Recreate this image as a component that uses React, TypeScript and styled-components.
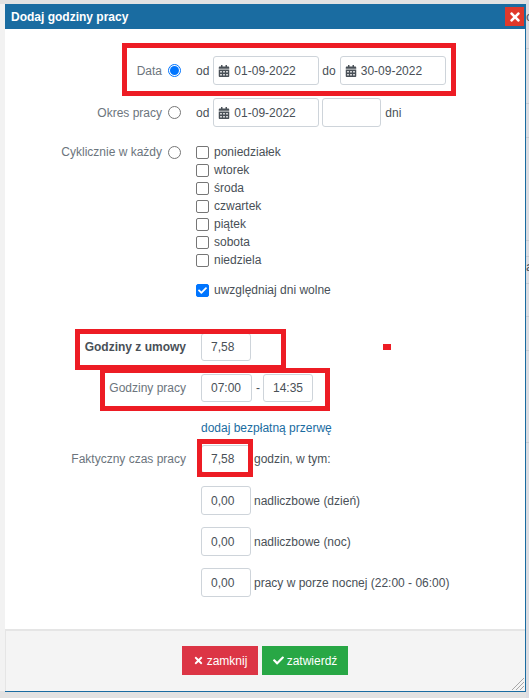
import React from "react";
import styled, { createGlobalStyle } from "styled-components";
import { FaCalendarAlt, FaCheck, FaTimes } from "react-icons/fa";

const GlobalStyle = createGlobalStyle`
  html, body {
    margin: 0;
    padding: 0;
    background: #f2f2f2;
  }
  * {
    box-sizing: border-box;
  }
`;

const Page = styled.div`
  width: 529px;
  height: 698px;
  padding: 4px 3px 6px 5px;
  overflow: hidden;
  position: relative;
  font-family: "Liberation Sans", Arial, sans-serif;
  font-size: 12px;
  color: #495057;
  background: linear-gradient(#e2e2e2 0 4px, #f2f2f2 4px 691px, #e2e2e2 691px);
`;

// sliver of the page behind the dialog
const BackdropEdge = styled.div`
  position: absolute;
  top: 0;
  right: 0;
  width: 3px;
  height: 698px;
  overflow: hidden;
  background: #dcdde2;
`;

const EdgeLine = styled.div<{ $y: number }>`
  position: absolute;
  left: 0;
  top: ${(p) => p.$y}px;
  width: 3px;
  height: 1px;
  background: #c9cbd1;
`;

const EdgeGlyph = styled.span<{ $y: number }>`
  position: absolute;
  left: 0;
  top: ${(p) => p.$y}px;
  font-size: 13px;
  line-height: 14px;
  color: #4a5058;
`;

const Dialog = styled.div`
  width: 521px;
  height: 688px;
  position: relative;
  display: flex;
  flex-direction: column;
  background: #fff;
  border-right: 1px solid #1a6ca1;
  border-bottom: 1px solid #1a6ca1;
`;

const TitleBar = styled.div`
  height: 25px;
  flex: none;
  display: flex;
  align-items: center;
  justify-content: space-between;
  padding: 0 0 0 6px;
  background: #1a6ca1;
  color: #fff;
  font-size: 12px;
  font-weight: 700;
`;

const CloseButton = styled.button`
  width: 19px;
  height: 19px;
  margin-right: 1px;
  padding: 0;
  border: 0;
  display: flex;
  align-items: center;
  justify-content: center;
  background: #e0392b;
  color: #fff;
  font-size: 14px;
`;

const Body = styled.div`
  flex: 1;
  padding-top: 27px;
`;

const Row = styled.div<{ $top?: number; $height?: number }>`
  display: flex;
  align-items: center;
  height: ${(p) => p.$height ?? 29}px;
  margin-top: ${(p) => p.$top ?? 0}px;
`;

const ChoiceLabel = styled.span`
  width: 157px;
  flex: none;
  text-align: right;
  color: #6c757d;
`;

const HoursLabel = styled.span<{ $bold?: boolean }>`
  width: 181px;
  margin-right: 15px;
  flex: none;
  text-align: right;
  color: ${(p) => (p.$bold ? "#495057" : "#6c757d")};
  font-weight: ${(p) => (p.$bold ? 700 : 400)};
`;

const Radio = styled.span<{ $on?: boolean }>`
  width: 13px;
  height: 13px;
  margin: 0 15px 0 6px;
  flex: none;
  border-radius: 50%;
  background: #fff;
  border: 1px solid ${(p) => (p.$on ? "#0075ff" : "#767676")};
  display: flex;
  align-items: center;
  justify-content: center;

  &::after {
    content: "";
    width: 9px;
    height: 9px;
    border-radius: 50%;
    background: ${(p) => (p.$on ? "#0075ff" : "transparent")};
  }
`;

const Word = styled.span<{ $left?: number; $right?: number }>`
  margin-left: ${(p) => p.$left ?? 0}px;
  margin-right: ${(p) => p.$right ?? 0}px;
  white-space: nowrap;
`;

const Field = styled.div<{ $width?: number; $height?: number; $left?: number }>`
  width: ${(p) => p.$width ?? 50}px;
  height: ${(p) => p.$height ?? 29}px;
  margin-left: ${(p) => p.$left ?? 0}px;
  padding-left: 9px;
  flex: none;
  display: flex;
  align-items: center;
  border: 1px solid #ced4da;
  border-radius: 3px;
  background: #fff;
`;

const DateField = styled(Field)`
  width: 106px;
  gap: 4px;
  padding-left: 4px;

  svg {
    font-size: 12px;
    color: #495057;
  }
`;

const CycleRow = styled.div`
  display: flex;
  align-items: flex-start;
  margin-top: 16px;
`;

const CycleLabel = styled(Row)`
  height: 18px;
  width: 191px;
  flex: none;
`;

const DayList = styled.div`
  display: flex;
  flex-direction: column;
`;

const DayRow = styled.label<{ $top?: number }>`
  height: 18px;
  margin-top: ${(p) => p.$top ?? 0}px;
  display: flex;
  align-items: center;
  gap: 5px;
`;

const CheckBox = styled.span<{ $on?: boolean }>`
  width: 13px;
  height: 13px;
  flex: none;
  border-radius: 2px;
  border: 1px solid ${(p) => (p.$on ? "#0075ff" : "#767676")};
  background: ${(p) => (p.$on ? "#0075ff" : "#fff")};
  display: flex;
  align-items: center;
  justify-content: center;
  color: #fff;
  font-size: 9px;
`;

const BreakLink = styled.a`
  display: block;
  height: 18px;
  line-height: 18px;
  margin: 17px 0 8px 196px;
  color: #1a6ca1;
`;

const Footer = styled.div`
  height: 62px;
  flex: none;
  display: flex;
  justify-content: center;
  gap: 4px;
  padding: 15px 1px 0 0;
  background: #f4f4f4;
  border-top: 2px solid #e5e5e5;
  border-left: 1px solid #e5e5e5;
`;

const ActionButton = styled.button<{ $color: string; $width: number }>`
  width: ${(p) => p.$width}px;
  height: 29px;
  padding: 0;
  border: 0;
  display: flex;
  align-items: center;
  justify-content: center;
  gap: 3px;
  background: ${(p) => p.$color};
  color: #fff;
  font-family: inherit;
  font-size: 12px;

  svg {
    font-size: 11px;
  }
`;

const Highlight = styled.div<{ $x: number; $y: number; $w: number; $h: number }>`
  position: absolute;
  left: ${(p) => p.$x}px;
  top: ${(p) => p.$y}px;
  width: ${(p) => p.$w}px;
  height: ${(p) => p.$h}px;
  border: 5px solid #ed1c24;
`;

const RedDot = styled.div`
  position: absolute;
  left: 383px;
  top: 344px;
  width: 8px;
  height: 6px;
  background: #ed1c24;
`;

const ResizeGrip = styled.svg`
  position: absolute;
  right: 0;
  bottom: 0;
`;

const days = ["poniedziałek", "wtorek", "środa", "czwartek", "piątek", "sobota", "niedziela"];

const extras = ["nadliczbowe (dzień)", "nadliczbowe (noc)", "pracy w porze nocnej (22:00 - 06:00)"];

const edgeLines = [48, 103, 137, 240, 256, 283, 316, 350, 442];

const App: React.FC = () => {
  return (
    <Page>
      <GlobalStyle />
      <BackdropEdge>
        {edgeLines.map((y) => (
          <EdgeLine key={y} $y={y} />
        ))}
        <EdgeGlyph $y={10}>c</EdgeGlyph>
        <EdgeGlyph $y={260}>a</EdgeGlyph>
      </BackdropEdge>
      <Dialog>
        <TitleBar>
          Dodaj godziny pracy
          <CloseButton>
            <FaTimes />
          </CloseButton>
        </TitleBar>
        <Body>
          <Row>
            <ChoiceLabel>Data</ChoiceLabel>
            <Radio $on />
            <Word $right={4}>od</Word>
            <DateField>
              <FaCalendarAlt />
              01-09-2022
            </DateField>
            <Word $left={3} $right={4}>do</Word>
            <DateField>
              <FaCalendarAlt />
              30-09-2022
            </DateField>
          </Row>
          <Row $top={13}>
            <ChoiceLabel>Okres pracy</ChoiceLabel>
            <Radio />
            <Word $right={4}>od</Word>
            <DateField>
              <FaCalendarAlt />
              01-09-2022
            </DateField>
            <Field $width={59} $left={3} />
            <Word $left={4}>dni</Word>
          </Row>
          <CycleRow>
            <CycleLabel>
              <ChoiceLabel>Cyklicznie w każdy</ChoiceLabel>
              <Radio />
            </CycleLabel>
            <DayList>
              {days.map((day) => (
                <DayRow key={day}>
                  <CheckBox />
                  {day}
                </DayRow>
              ))}
              <DayRow $top={12}>
                <CheckBox $on>
                  <FaCheck />
                </CheckBox>
                uwzględniaj dni wolne
              </DayRow>
            </DayList>
          </CycleRow>
          <Row $top={34} $height={28}>
            <HoursLabel $bold>Godziny z umowy</HoursLabel>
            <Field $height={28}>7,58</Field>
          </Row>
          <Row $top={13} $height={28}>
            <HoursLabel>Godziny pracy</HoursLabel>
            <Field $height={28} $width={51}>07:00</Field>
            <Word $left={4} $right={3}>-</Word>
            <Field $height={28}>14:35</Field>
          </Row>
          <BreakLink>dodaj bezpłatną przerwę</BreakLink>
          <Row $height={28}>
            <HoursLabel>Faktyczny czas pracy</HoursLabel>
            <Field $height={28}>7,58</Field>
            <Word $left={3}>godzin, w tym:</Word>
          </Row>
          {extras.map((text, i) => (
            <Row key={text} $top={i === 0 ? 13 : 12}>
              <HoursLabel />
              <Field>0,00</Field>
              <Word $left={3}>{text}</Word>
            </Row>
          ))}
        </Body>
        <Footer>
          <ActionButton $color="#dc3545" $width={76}>
            <FaTimes />
            zamknij
          </ActionButton>
          <ActionButton $color="#28a745" $width={86}>
            <FaCheck />
            zatwierdź
          </ActionButton>
        </Footer>
        <ResizeGrip width="14" height="14" viewBox="0 0 14 14">
          <path d="M1 13 13 1M5 13 13 5M9 13 13 9" stroke="#a8a8a8" strokeWidth="1" fill="none" />
        </ResizeGrip>
        <Highlight $x={117} $y={39} $w={334} $h={53} />
        <Highlight $x={70} $y={325} $w={211} $h={41} />
        <Highlight $x={95} $y={364} $w={230} $h={43} />
        <Highlight $x={192} $y={435} $w={56} $h={38} />
      </Dialog>
      <RedDot />
    </Page>
  );
};

export default App;
